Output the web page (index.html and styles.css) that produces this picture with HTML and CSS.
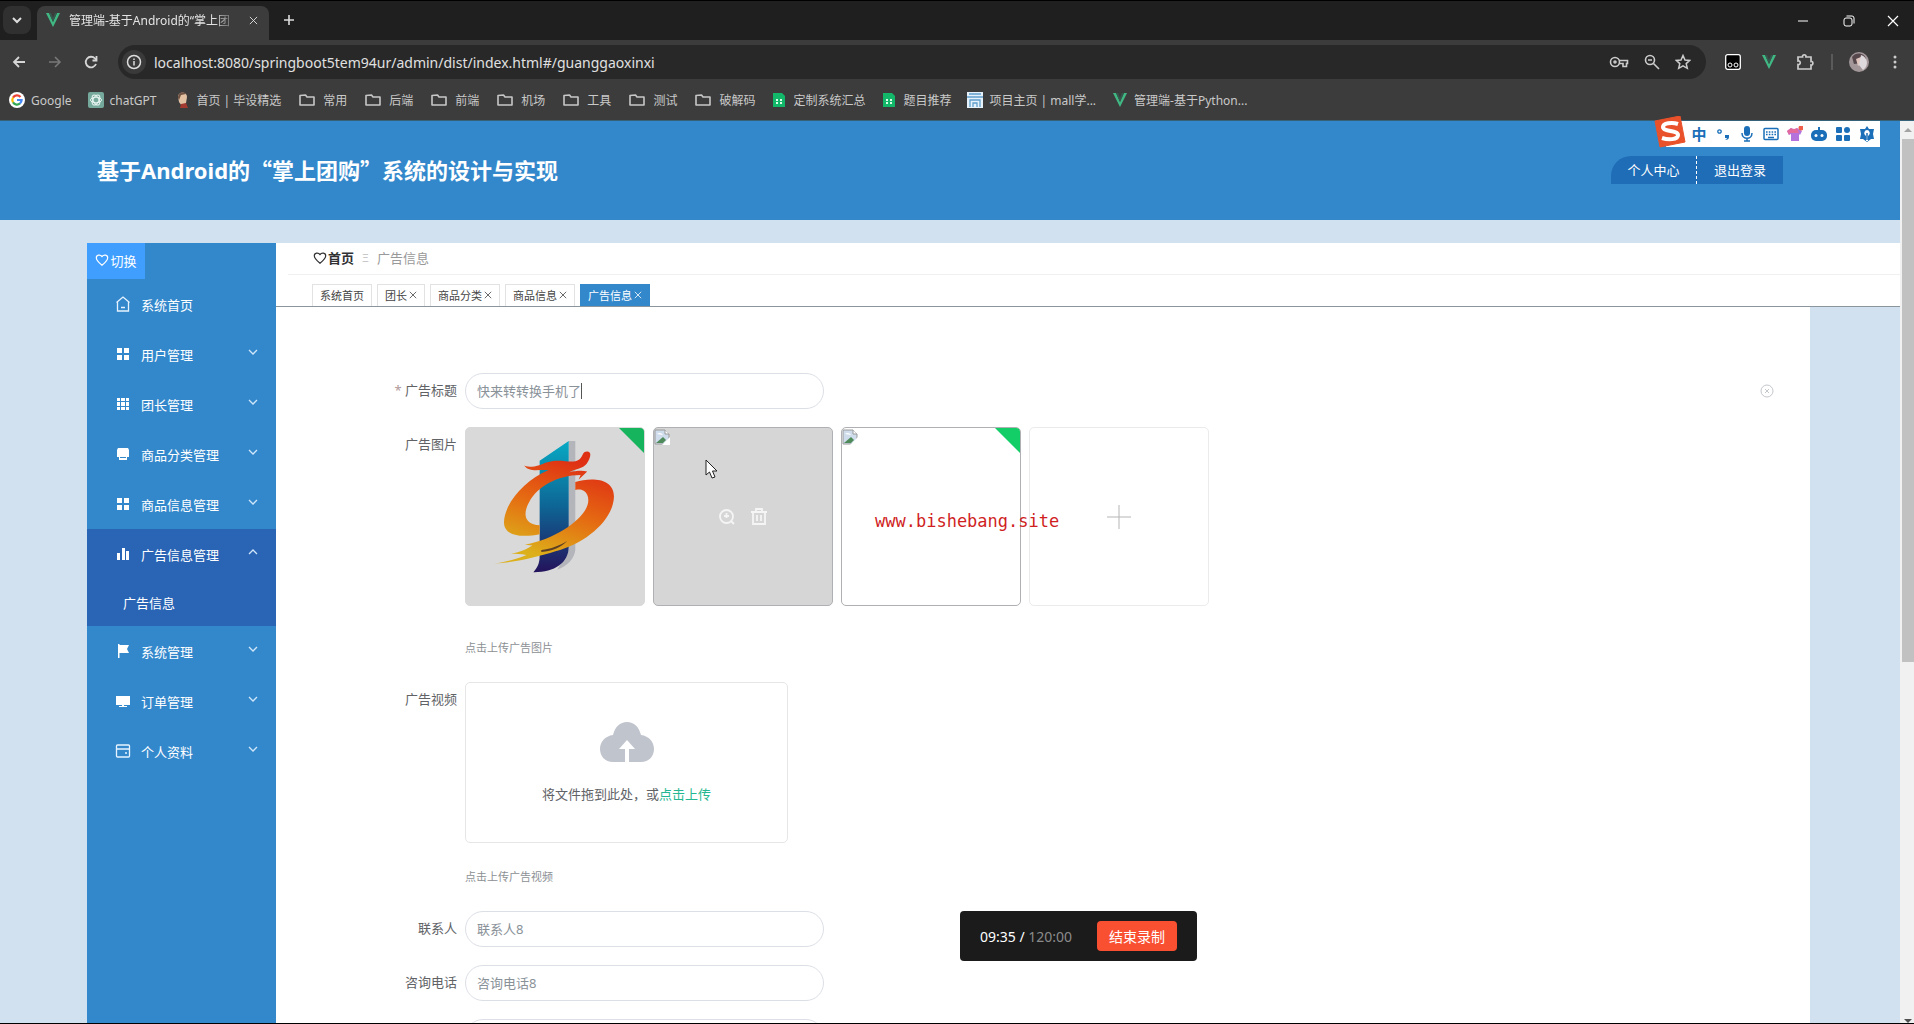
FILE: index.html
```html
<!DOCTYPE html>
<html lang="zh-CN">
<head>
    <meta charset="UTF-8">
    <meta name="viewport" content="width=device-width, initial-scale=1.0">
    <title>管理端-基于Android的“掌上团购”系统的设计与实现</title>
    <link rel="stylesheet" href="styles.css">
</head>
<body>

    <!-- shared icons -->
    <svg class="sprite" aria-hidden="true">
        <symbol id="vue" viewBox="0 0 16 16"><path d="M1 1h3l4 9 4-9h3L8 15z" fill="#41b883"/><path d="M4 1h2l2 5 2-5h2L8 10z" fill="#35594e"/></symbol>
        <symbol id="folder" viewBox="0 0 20 16"><path d="M3 3.500v9.500h14V5H10L8.500 3z" fill="none" stroke="#c7c7c7" stroke-width="1.600" stroke-linejoin="round"/></symbol>
        <symbol id="sheet" viewBox="0 0 16 16"><path d="M2 1h9l3 3v11H2z" fill="#12b76a"/><path d="M5 7h2v2H5zM9 7h2v2H9zM5 10h2v2H5zM9 10h2v2H9z" fill="#d9ffe9"/></symbol>
        <symbol id="heart" viewBox="0 0 16 16"><path d="M8 14C3 10 1.500 8 1.500 5.500 1.500 2 6 1.500 8 4c2-2.500 6.500-2 6.500 1.500C14.500 8 13 10 8 14z" fill="none" stroke="currentColor" stroke-width="1.400"/></symbol>
        <symbol id="four" viewBox="0 0 14 14"><path d="M1 1h5v5H1zM8 1h5v5H8zM1 8h5v5H1zM8 8h5v5H8z" fill="#fff"/></symbol>
        <symbol id="down" viewBox="0 0 12 12"><path d="M2 4l4 4 4-4" fill="none" stroke="#cfe6fa" stroke-width="1.300"/></symbol>
        <symbol id="close" viewBox="0 0 10 10"><path d="M1 1l8 8M9 1L1 9" fill="none" stroke="currentColor"/></symbol>
        <symbol id="broken" viewBox="0 0 16 16"><path d="M1 1h10l4 4v10H1z" fill="#cfdcec" stroke="#9a9a9a"/><path d="M2 14l7-6 3 3-3 3z" fill="#4f8a5a"/><path d="M3 5c2-2 5-1 6 1z" fill="#fff"/><path d="M16 8L8 16h8z" fill="#fff"/><path d="M11 1v4h4" fill="#fff" stroke="#9a9a9a"/></symbol>
    </svg>

    <div class="tabstrip">
        <button class="tab-search" aria-label="搜索标签页">
            <svg width="12" height="12" viewBox="0 0 12 12"><path d="M2 4l4 4 4-4" fill="none" stroke="#ddd" stroke-width="2"/></svg>
        </button>
        <div class="browser-tab">
            <svg width="16" height="16"><use href="#vue"/></svg>
            <span class="tab-title">管理端-基于Android的“掌上团</span>
            <button class="tab-close" aria-label="关闭标签页"><svg width="9" height="9"><use href="#close"/></svg></button>
        </div>
        <button class="new-tab" aria-label="新标签页">
            <svg width="12" height="12" viewBox="0 0 12 12"><path d="M6 1v10M1 6h10" stroke="#ddd" stroke-width="1.600"/></svg>
        </button>
        <div class="window-controls">
            <button aria-label="最小化"><svg width="12" height="12" viewBox="0 0 12 12"><path d="M1 6h10" stroke="#fff"/></svg></button>
            <button aria-label="还原"><svg width="12" height="12" viewBox="0 0 12 12" fill="none" stroke="#fff"><rect x="1" y="3" width="8" height="8" rx="2"/><path d="M3.500 1H9a2 2 0 0 1 2 2v5.500"/></svg></button>
            <button aria-label="关闭"><svg width="12" height="12" viewBox="0 0 12 12"><path d="M1 1l10 10M11 1L1 11" stroke="#fff" stroke-width="1.200"/></svg></button>
        </div>
    </div>

    <div class="toolbar">
        <button class="tool-btn" aria-label="后退"><svg width="14" height="14" viewBox="0 0 14 14" fill="none" stroke="#d6d6d6" stroke-width="1.800"><path d="M13 7H2M7 2L2 7l5 5"/></svg></button>
        <button class="tool-btn" aria-label="前进"><svg width="14" height="14" viewBox="0 0 14 14" fill="none" stroke="#787878" stroke-width="1.600"><path d="M1 7h11M7 2l5 5-5 5"/></svg></button>
        <button class="tool-btn" aria-label="重新加载"><svg width="14" height="14" viewBox="0 0 14 14" fill="none" stroke="#d6d6d6" stroke-width="1.800"><path d="M12 9A5.300 5.300 0 1 1 11 3.500L12.500 5"/><path d="M12.500 1v4.500H8.500"/></svg></button>
        <div class="omnibox">
            <span class="site-info"><svg width="16" height="16" viewBox="0 0 16 16" fill="none" stroke="#ddd" stroke-width="1.500"><circle cx="8" cy="8" r="6.500"/><path d="M8 7v4.500M8 4.500v1.500"/></svg></span>
            <input class="url" type="text" aria-label="地址栏" value="localhost:8080/springboot5tem94ur/admin/dist/index.html#/guanggaoxinxi">
            <div class="omni-icons">
                <svg width="20" height="16" viewBox="0 0 20 16" fill="none" stroke="#ccc" stroke-width="1.600"><circle cx="6" cy="8" r="4.500"/><circle cx="6" cy="8" r="1"/><path d="M10 6.500h8.500v3h-1v3h-3.500V9.500H10"/></svg>
                <svg width="16" height="16" viewBox="0 0 16 16" fill="none" stroke="#ccc" stroke-width="1.600"><circle cx="6" cy="6" r="4.500"/><path d="M9.500 9.500L15 15M4 6h4"/></svg>
                <svg width="16" height="16" viewBox="0 0 16 16" fill="none" stroke="#ccc" stroke-width="1.500"><path d="M8 1.500l2 4.500 4.800.4-3.600 3.200 1.100 4.700L8 11.800l-4.300 2.500 1.100-4.700L1.200 6.400 6 6z"/></svg>
            </div>
        </div>
        <button class="tool-btn" aria-label="扩展"><svg width="16" height="16" viewBox="0 0 16 16"><rect x=".7" y=".7" width="14.600" height="14.600" rx="2" fill="#000" stroke="#fff" stroke-width="1.300"/><circle cx="5" cy="11" r="2" fill="none" stroke="#fff"/><circle cx="11" cy="11" r="2" fill="none" stroke="#fff"/></svg></button>
        <button class="tool-btn" aria-label="Vue"><svg width="16" height="16"><use href="#vue"/></svg></button>
        <button class="tool-btn" aria-label="扩展程序"><svg width="18" height="18" viewBox="0 0 18 18" fill="none" stroke="#ccc" stroke-width="1.700"><path d="M2 4h4.500c-.5-3 4-3 3.500 0H15v4.500c2.500-.5 2.500 4 0 3.500V16H2v-4.500c3 .5 3-4 0-3.500z"/></svg></button>
        <span class="divider"></span>
        <button class="avatar" aria-label="用户"><svg width="20" height="20" viewBox="0 0 20 20"><circle cx="10" cy="10" r="10" fill="#a3979a"/><path d="M3 5c4-6 13-4 14 2l-5 4-7 1z" fill="#55474b"/><path d="M7 7l5-2 2 5-5 4z" fill="#e2c6c0"/><path d="M12 3c7 2 8 11 2 15l-4-5z" fill="#ddd9dc"/></svg></button>
        <button class="tool-btn" aria-label="菜单"><svg width="4" height="16" viewBox="0 0 4 16" fill="#ccc"><circle cx="2" cy="3" r="1.500"/><circle cx="2" cy="8" r="1.500"/><circle cx="2" cy="13" r="1.500"/></svg></button>
    </div>

    <nav class="bookmarks">
        <a href="#"><svg width="16" height="16" viewBox="0 0 16 16"><circle cx="8" cy="8" r="8" fill="#fff"/><g fill="none" stroke-width="2.200"><path d="M11.500 5A4.600 4.600 0 0 0 4 5.600" stroke="#ea4335"/><path d="M4 5.600a4.600 4.600 0 0 0 0 4.800" stroke="#fbbc05"/><path d="M4 10.400a4.600 4.600 0 0 0 7 1" stroke="#34a853"/><path d="M11 11.400A4.600 4.600 0 0 0 12.600 8H8" stroke="#4285f4"/></g></svg>Google</a>
        <a href="#"><svg width="16" height="16" viewBox="0 0 16 16"><rect width="16" height="16" rx="2" fill="#75a99c"/><g fill="none" stroke="#e8f5f1"><ellipse cx="8" cy="8" rx="5.500" ry="2.800"/><ellipse cx="8" cy="8" rx="5.500" ry="2.800" transform="rotate(60 8 8)"/><ellipse cx="8" cy="8" rx="5.500" ry="2.800" transform="rotate(120 8 8)"/></g></svg>chatGPT</a>
        <a href="#"><svg width="18" height="16" viewBox="0 0 18 16"><path d="M6 5c0-6 9-6 9 0l-1 6-4 3-3-4z" fill="#e3c2a4"/><path d="M6 6c0-7 7-6 8-4L9 3 7 8z" fill="#6e5140"/><path d="M8 16l1-4 5-1 2 5z" fill="#a33a32"/></svg>首页 | 毕设精选</a>
        <a href="#"><svg width="20" height="16"><use href="#folder"/></svg>常用</a>
        <a href="#"><svg width="20" height="16"><use href="#folder"/></svg>后端</a>
        <a href="#"><svg width="20" height="16"><use href="#folder"/></svg>前端</a>
        <a href="#"><svg width="20" height="16"><use href="#folder"/></svg>机场</a>
        <a href="#"><svg width="20" height="16"><use href="#folder"/></svg>工具</a>
        <a href="#"><svg width="20" height="16"><use href="#folder"/></svg>测试</a>
        <a href="#"><svg width="20" height="16"><use href="#folder"/></svg>破解码</a>
        <a href="#"><svg width="16" height="16"><use href="#sheet"/></svg>定制系统汇总</a>
        <a href="#"><svg width="16" height="16"><use href="#sheet"/></svg>题目推荐</a>
        <a href="#"><svg width="16" height="16" viewBox="0 0 16 16"><rect width="16" height="16" fill="#e6f2fb"/><path d="M0 5h16M2 2h12M3 15V8h10v7M6 15v-4h4v4" fill="none" stroke="#5f9fcb" stroke-width="1.300"/></svg>项目主页 | mall学...</a>
        <a href="#"><svg width="16" height="16"><use href="#vue"/></svg>管理端-基于Python...</a>
    </nav>

    <div class="viewport">
        <div class="page">
            <header class="site-header">
                <h1>基于Android的<span class="cjk">“掌上团购”</span>系统的设计与实现</h1>
                <div class="user-links">
                    <button class="profile">个人中心</button>
                    <button>退出登录</button>
                </div>
            </header>

            <div class="layout">
                <aside class="sidebar">
                    <button class="toggle"><svg width="14" height="14"><use href="#heart"/></svg>切换</button>
                    <nav class="menu">
                        <a href="#"><svg class="icon" width="16" height="16" viewBox="0 0 16 16" fill="none" stroke="#e6f3ff" stroke-width="1.300"><path d="M1.500 6.500L8 1l6.500 5.500M2.500 6v9h11V6M6 11.500h4"/></svg><span>系统首页</span></a>
                        <a href="#"><svg class="icon" width="14" height="14"><use href="#four"/></svg><span>用户管理</span><svg class="arrow" width="12" height="12"><use href="#down"/></svg></a>
                        <a href="#"><svg class="icon" width="14" height="14" viewBox="0 0 14 14" fill="#fff"><path d="M1 1h3v3H1zM5 1h4v3H5zM10 1h3v3h-3zM1 5h3v4H1zM5 5h4v4H5zM10 5h3v4h-3zM1 10h3v3H1zM5 10h4v3H5zM10 10h3v3h-3z"/></svg><span>团长管理</span><svg class="arrow" width="12" height="12"><use href="#down"/></svg></a>
                        <a href="#"><svg class="icon" width="14" height="14" viewBox="0 0 14 14" fill="#fff"><path d="M2 1h10l1 2v7h-2v3H3v-3H1V3zM4 10v1h6v-1z" fill-rule="evenodd"/></svg><span>商品分类管理</span><svg class="arrow" width="12" height="12"><use href="#down"/></svg></a>
                        <a href="#"><svg class="icon" width="14" height="14"><use href="#four"/></svg><span>商品信息管理</span><svg class="arrow" width="12" height="12"><use href="#down"/></svg></a>
                        <a class="active" href="#"><svg class="icon" width="14" height="14" viewBox="0 0 14 14" fill="#fff"><path d="M1 6h3v7H1zM6 1h3v12H6zM10 4h3v9h-3z"/></svg><span>广告信息管理</span><svg class="arrow" width="12" height="12" viewBox="0 0 12 12"><path d="M2 8l4-4 4 4" fill="none" stroke="#cfe6fa" stroke-width="1.300"/></svg></a>
                        <a class="active submenu" href="#">广告信息</a>
                        <a href="#"><svg class="icon" width="14" height="14" viewBox="0 0 14 14" fill="#fff"><path d="M2 0h1.500v14H2zM3 1h10l-2 4 2 4H3z"/></svg><span>系统管理</span><svg class="arrow" width="12" height="12"><use href="#down"/></svg></a>
                        <a href="#"><svg class="icon" width="14" height="14" viewBox="0 0 14 14" fill="#fff"><path d="M0 2h14v9H0zM6 11h2v1h3v1H3v-1h3z"/></svg><span>订单管理</span><svg class="arrow" width="12" height="12"><use href="#down"/></svg></a>
                        <a href="#"><svg class="icon" width="16" height="16" viewBox="0 0 16 16" fill="none" stroke="#e6f3ff" stroke-width="1.300"><rect x="1.500" y="2" width="13" height="12" rx="1"/><path d="M1.500 6h13M10 10h2"/></svg><span>个人资料</span><svg class="arrow" width="12" height="12"><use href="#down"/></svg></a>
                    </nav>
                </aside>

                <main class="main">
                    <div class="main-top">
                        <div class="breadcrumb">
                            <svg width="14" height="14"><use href="#heart"/></svg>
                            <a href="#">首页</a>
                            <span class="sep">Ξ</span>
                            <span>广告信息</span>
                        </div>
                        <div class="page-tabs">
                            <button>系统首页</button>
                            <button>团长<svg width="8" height="8"><use href="#close"/></svg></button>
                            <button>商品分类<svg width="8" height="8"><use href="#close"/></svg></button>
                            <button>商品信息<svg width="8" height="8"><use href="#close"/></svg></button>
                            <button class="current">广告信息<svg width="8" height="8"><use href="#close"/></svg></button>
                        </div>
                    </div>

                    <form class="ad-form">
                        <div class="form-item">
                            <label for="title"><span class="required">*</span> 广告标题</label>
                            <div class="field title-field">
                                <input type="text" id="title" value="快来转转换手机了">
                                <span class="caret"></span>
                                <svg class="clear" width="14" height="14" viewBox="0 0 14 14" fill="none" stroke="#c4c7cc"><circle cx="7" cy="7" r="6"/><path d="M5 5l4 4M9 5l-4 4"/></svg>
                            </div>
                        </div>
                        <div class="form-item">
                            <label for="picture">广告图片</label>
                            <div class="field">
                                <div class="pictures">
                                    <div class="picture dimmed">
                                        <svg class="artwork" viewBox="77 52 536 533">
                                            <defs>
                                                <linearGradient id="bar" x1="0" y1="0" x2="0" y2="1"><stop offset="0" stop-color="#08a9c4"/><stop offset=".5" stop-color="#0e6595"/><stop offset="1" stop-color="#24135c"/></linearGradient>
                                                <linearGradient id="fire" gradientUnits="userSpaceOnUse" x1="400" y1="150" x2="300" y2="440"><stop offset="0" stop-color="#df3014"/><stop offset=".5" stop-color="#e56a12"/><stop offset="1" stop-color="#dcb01a"/></linearGradient>
                                            </defs>
                                            <path d="M385 90h20v330q-5 40-55 60l35-60z" fill="#b4b5bb"/>
                                            <path d="M297 150l88-60v320c0 50-45 78-107 77 12-15 19-25 19-50z" fill="url(#bar)"/>
                                            <path d="M250 164c40 14 55-12 95-14 35-1 53 8 72-4 12-8 8-24 24-24s9 22-1 36c-12 17-37 16-54 27 20-5 39-6 55-3l-26 25 6-14c-72 1-130 35-156 82-22 40-10 69 32 70v27c-50 10-108 8-108-36 1-55 60-126 135-158-35-2-58 7-74-14z" fill="url(#fire)"/>
                                            <path d="M405 214c45-14 118-14 117 45-2 70-85 141-177 165-55 17-120 34-186 37 45-6 78-17 98-26-17-4-32-4-47-4 31-6 48-14 65-25l-23-2c48-9 83-24 118-45 54-34 85-74 71-106-7-15-20-18-36-15z" fill="url(#fire)"/>
                                            <path d="M302 420c30-3 55-13 78-27-18 19-43 30-78 33z" fill="#5d4024"/>
                                        </svg>
                                        <span class="badge"></span>
                                    </div>
                                    <div class="picture hovered">
                                        <svg class="broken" width="16" height="16"><use href="#broken"/></svg>
                                        <button type="button" aria-label="预览"><svg width="18" height="18" viewBox="0 0 18 18" fill="none" stroke="#f5f5f5" stroke-width="1.800"><circle cx="8.500" cy="8.500" r="6.500"/><path d="M13 13l3 3M8.500 5v5M6 8h5"/></svg></button>
                                        <button type="button" aria-label="删除"><svg width="18" height="18" viewBox="0 0 18 18" fill="none" stroke="#f5f5f5" stroke-width="1.800"><path d="M1 4h16M6 4V1h6v3M3 4v12h12V4M7 7v6M11 7v6"/></svg></button>
                                        <svg class="cursor" width="14" height="20" viewBox="0 0 14 20"><path d="M1 1v15l3.500-3 2.500 6 3-1-2.500-6H12z" fill="#fff" stroke="#222"/></svg>
                                    </div>
                                    <div class="picture loaded">
                                        <svg class="broken" width="16" height="16"><use href="#broken"/></svg>
                                        <span class="badge"></span>
                                    </div>
                                    <button type="button" class="picture add" id="picture" aria-label="添加图片"><svg width="24" height="24" viewBox="0 0 24 24"><path d="M12 0v24M0 12h24" stroke="#b5b5b5"/></svg></button>
                                </div>
                                <p class="tip">点击上传广告图片</p>
                            </div>
                        </div>
                        <div class="form-item">
                            <label for="video">广告视频</label>
                            <div class="field">
                                <button type="button" class="dragger" id="video">
                                    <svg width="54" height="40" viewBox="0 0 54 40"><path d="M13 40C5 40 0 34 0 27c0-7 5-13 13-14C15 5 20 0 27 0s12 5 14 13c8 1 13 7 13 14 0 7-5 13-13 13H29V27h6l-8-9-8 9h6v13z" fill="#c0c4cc"/></svg>
                                    <span>将文件拖到此处，或<em>点击上传</em></span>
                                </button>
                                <p class="tip video-tip">点击上传广告视频</p>
                            </div>
                        </div>
                        <div class="form-item">
                            <label for="contact">联系人</label>
                            <div class="field"><input type="text" id="contact" value="联系人8"></div>
                        </div>
                        <div class="form-item">
                            <label for="phone">咨询电话</label>
                            <div class="field"><input type="text" id="phone" value="咨询电话8"></div>
                        </div>
                        <div class="form-item">
                            <div class="field last"><input type="text" aria-label="其他"></div>
                        </div>
                    </form>
                </main>
            </div>
        </div>

        <div class="scrollbar">
            <svg width="12" height="18" viewBox="0 0 12 18"><path d="M2 11l4-4 4 4z" fill="#a3a3a3"/></svg>
            <div class="thumb"></div>
            <svg width="12" height="8" viewBox="0 0 12 8"><path d="M2 4h8l-4 4z" fill="#505050"/></svg>
        </div>

        <!-- input method bar -->
        <div class="ime">
            <svg class="ime-logo" width="32" height="32" viewBox="0 0 32 32"><path d="M1 5l25-5 5 26-25 5z" fill="#e9512a" stroke="#e9512a" stroke-linejoin="round"/><path d="M24 8c-6-2-15-1-15 3 0 5 15 3 15 8 0 5-10 5-16 3" fill="none" stroke="#fff" stroke-width="4"/></svg>
            <span class="ime-lang">中</span>
            <svg width="16" height="16" viewBox="0 0 16 16"><circle cx="4.500" cy="5.500" r="1.700" fill="none" stroke="#1a6fb8" stroke-width="1.300"/><path d="M10 9h4v2q0 3-4 3 2-1 2-2h-2z" fill="#1a6fb8"/></svg>
            <svg width="16" height="16" viewBox="0 0 16 16"><rect x="5" y="0" width="6" height="10" rx="3" fill="#1a6fb8"/><path d="M3 7c0 7 10 7 10 0M8 12v3M5 15h6" fill="none" stroke="#1a6fb8" stroke-width="1.500"/></svg>
            <svg width="16" height="16" viewBox="0 0 16 16" fill="none" stroke="#1a6fb8" stroke-width="1.500"><rect x="1" y="2.500" width="14" height="11" rx="1"/><path d="M3 6h10M3 8.500h10" stroke-width="1.700" stroke-dasharray="1.600 1.200"/><path d="M5 11.500h6"/></svg>
            <svg width="16" height="16" viewBox="0 0 16 16"><path d="M0 5l4-3q3 2 6 0l5 3-2 4-1-1v7H4V8L2 9z" fill="#b473dc"/><path d="M0 5l4-3q3 2 6 0l2 5H3L2 9z" fill="#e46a9b"/><circle cx="14" cy="2" r="2.500" fill="#ef5f4b"/></svg>
            <svg width="16" height="16" viewBox="0 0 16 16"><rect x="0" y="4" width="16" height="11" rx="5" fill="#1a6fb8"/><path d="M8 4V1" stroke="#1a6fb8" stroke-width="2"/><circle cx="5" cy="9.500" r="1.500" fill="#fff"/><circle cx="11" cy="9.500" r="1.500" fill="#fff"/></svg>
            <svg width="16" height="16" viewBox="0 0 16 16" fill="#1a6fb8"><rect x="1" y="1" width="6" height="6" rx="1"/><rect x="9" y="1" width="6" height="6" rx="3"/><rect x="1" y="9" width="6" height="6" rx="1"/><rect x="9" y="9" width="6" height="6" rx="1"/></svg>
            <svg width="16" height="16" viewBox="0 0 16 16"><path d="M8 0l2 3h5l-1 5 1 5h-3l-4 3-4-3H1l1-5-1-5h5z" fill="#1a6fb8"/><path d="M8 4a3 3 0 0 0-2 5l1 1v5h2v-5l1-1a3 3 0 0 0-2-5z" fill="#fff"/><path d="M8 7v7" stroke="#1a6fb8" stroke-width="1.500"/></svg>
        </div>

        <div class="watermark">www.bishebang.site</div>

        <div class="recorder">
            <span class="elapsed">09:35 / <span class="limit">120:00</span></span>
            <button>结束录制</button>
        </div>
    </div>

</body>
</html>
```
FILE: styles.css
```css
* {
    box-sizing: border-box;
}

body {
    display: flex;
    flex-direction: column;
    height: 100vh;
    margin: 0;
    overflow: hidden;
    border-top: 1px solid #000;
    border-bottom: 1px solid #000;
    background-color: #3c3c3c;
    font-family: "Noto Sans", "Noto Sans CJK SC", sans-serif;
    font-size: 13px;
}

button,
input {
    margin: 0;
    padding: 0;
    border: none;
    background: none;
    color: inherit;
    font: inherit;
}

button {
    display: flex;
    align-items: center;
    justify-content: center;
}

a {
    color: inherit;
    text-decoration: none;
}

svg {
    flex: none;
}

.sprite {
    position: absolute;
    width: 0;
    height: 0;
}

/* browser window */
.tabstrip {
    display: flex;
    flex: none;
    align-items: flex-end;
    height: 39px;
    padding-left: 3px;
    background-color: #1f1f1f;
}

.tab-search {
    width: 28px;
    height: 28px;
    margin-bottom: 6px;
    border-radius: 8px;
    background-color: #303030;
}

.browser-tab {
    display: flex;
    align-items: center;
    width: 232px;
    height: 34px;
    margin-left: 6px;
    padding: 0 9px 6px 8px;
    border-radius: 8px 8px 0 0;
    background-color: #3c3c3c;
    color: #e3e3e3;
    font-size: 12px;
}

.tab-title {
    flex: 1;
    margin: 0 8px;
    white-space: nowrap;
    mask-image: linear-gradient(to right, #000 86%, transparent);
}

.tab-close {
    width: 14px;
    height: 20px;
}

.new-tab {
    width: 28px;
    height: 28px;
    margin: 0 0 6px 6px;
}

.window-controls {
    display: flex;
    margin-left: auto;
}

.window-controls button {
    width: 46px;
    height: 39px;
}

.window-controls button:last-child {
    width: 42px;
}

.toolbar {
    display: flex;
    flex: none;
    align-items: center;
    gap: 8px;
    height: 40px;
    padding: 4px 5px 0;
}

.tool-btn {
    width: 28px;
    height: 28px;
}

.omnibox {
    display: flex;
    flex: 1;
    align-items: center;
    height: 34px;
    margin: 0 5px;
    padding: 0 15px 0 4px;
    border-radius: 17px;
    background-color: #282828;
}

.site-info {
    display: flex;
    align-items: center;
    justify-content: center;
    width: 24px;
    height: 24px;
    border-radius: 50%;
    background-color: #3a3a3a;
}

.url {
    flex: 1;
    margin-left: 8px;
    color: #e0e0e0;
    font-size: 14px;
}

.omni-icons {
    display: flex;
    gap: 15px;
}

.divider {
    width: 2px;
    height: 16px;
    margin: 0 8px 0 4px;
    background-color: #5a5a5a;
}

.avatar {
    width: 20px;
    height: 20px;
    margin-right: 4px;
}

.bookmarks {
    display: flex;
    flex: none;
    align-items: center;
    gap: 16px;
    height: 41px;
    padding: 0 9px;
    border-bottom: 1px solid #356179;
    color: #c9c9c9;
    font-size: 12px;
    white-space: nowrap;
}

.bookmarks a {
    display: flex;
    align-items: center;
    gap: 6px;
}

/* page */
.viewport {
    position: relative;
    display: flex;
    flex: 1;
    min-height: 0;
    background-color: #d2e1f0;
}

.page {
    display: flex;
    flex: 1;
    flex-direction: column;
    min-width: 0;
    overflow: hidden;
}

.site-header {
    display: flex;
    flex: none;
    align-items: center;
    justify-content: space-between;
    height: 99px;
    padding: 0 117px 2px 97px;
    background-color: #3388cc;
    color: #fff;
}

.site-header h1 {
    margin: 0;
    font-size: 22px;
    line-height: 32px;
}

.cjk {
    font-family: "Noto Sans CJK SC", sans-serif;
}

.user-links {
    display: flex;
}

.user-links button {
    width: 86px;
    height: 28px;
    background-color: #1f6db7;
}

.user-links .profile {
    border-right: 1px dashed #fff;
    border-top-left-radius: 20px;
}

.layout {
    display: flex;
    flex: 1;
    min-height: 0;
    padding: 23px 0 0 87px;
}

.sidebar {
    flex: none;
    width: 189px;
    background-color: #3388cc;
    color: #fff;
}

.toggle {
    gap: 1px;
    width: 58px;
    height: 36px;
    padding-bottom: 2px;
    background-color: #409eff;
}

.menu a {
    display: flex;
    align-items: center;
    height: 50px;
    padding: 0 17px 0 28px;
}

.menu .active {
    background-color: #2964b5;
}

.menu .submenu {
    height: 47px;
    padding-left: 36px;
}

.menu .icon {
    width: 16px;
    margin-right: 10px;
}

.menu .arrow {
    margin: 0 0 4px auto;
}

.main {
    display: flex;
    flex: 1;
    flex-direction: column;
    min-width: 0;
}

.main-top {
    flex: none;
    border-bottom: 1px solid #8b959e;
    background-color: #fff;
}

.breadcrumb {
    display: flex;
    align-items: center;
    height: 32px;
    margin-left: 12px;
    padding: 0 0 2px 25px;
    border-bottom: 1px solid #f0f0f0;
    color: #999;
}

.breadcrumb svg,
.breadcrumb a {
    color: #303133;
    font-weight: bold;
}

.breadcrumb a {
    margin-left: 1px;
}

.breadcrumb .sep {
    margin: 0 8px;
    color: #c8c8c8;
    font-size: 11px;
}

.page-tabs {
    display: flex;
    gap: 5px;
    padding: 9px 36px 0;
}

.page-tabs button {
    gap: 2px;
    height: 22px;
    padding: 0 7px 2px;
    border: 1px solid #e2e2e2;
    border-bottom: none;
    color: #444;
    font-size: 11px;
}

.page-tabs .current {
    border-color: #3388cc;
    background-color: #3388cc;
    color: #fff;
}

.ad-form {
    flex: 1;
    min-height: 0;
    margin-right: 90px;
    padding: 66px 36px 0 0;
    background-color: #fff;
    color: #606266;
}

.form-item {
    display: flex;
    margin-bottom: 18px;
}

.form-item label {
    width: 189px;
    padding-right: 8px;
    line-height: 34px;
    text-align: right;
}

.required {
    color: #b09a9a;
}

.field {
    flex: 1;
}

.field.last {
    margin-left: 189px;
}

.field input {
    display: block;
    width: 359px;
    height: 36px;
    padding: 0 11px 2px;
    border: 1px solid #dcdfe6;
    border-radius: 18px;
    color: #8a9299;
}

.title-field {
    position: relative;
    display: flex;
    align-items: center;
    justify-content: space-between;
}

.caret {
    position: absolute;
    left: 116px;
    width: 1px;
    height: 16px;
    background-color: #555;
}

.pictures {
    display: flex;
    gap: 8px;
}

.picture {
    position: relative;
    display: flex;
    align-items: center;
    justify-content: center;
    gap: 14px;
    width: 180px;
    height: 179px;
    overflow: hidden;
    border: 1px solid #aeb0b3;
    border-radius: 5px;
    background-color: #fff;
}

.picture.dimmed {
    border-color: #d9d9d9;
    background-color: #d9d9d9;
}

.picture.hovered {
    background-color: #d6d6d6;
}

.picture.add {
    border: 1px solid #ebebeb;
}

.artwork {
    width: 177px;
    height: 177px;
}

.badge {
    position: absolute;
    top: 0;
    right: 0;
    width: 25px;
    height: 25px;
    background-color: #13ce66;
    clip-path: polygon(0 0, 100% 0, 100% 100%);
}

.dimmed .badge {
    background-color: #16b45c;
}

.broken {
    position: absolute;
    top: 1px;
    left: 0;
}

.cursor {
    position: absolute;
    top: 31px;
    left: 51px;
}

.tip {
    margin: 25px 0 0;
    color: #8c9094;
    font-size: 11px;
    line-height: 33px;
}

.video-tip {
    margin-top: 17px;
}

.dragger {
    flex-direction: column;
    gap: 22px;
    width: 323px;
    height: 161px;
    border: 1px solid #e6e6e6;
    border-radius: 5px;
}

.dragger em {
    color: #25b791;
    font-style: normal;
}

.scrollbar {
    display: flex;
    flex: none;
    flex-direction: column;
    width: 14px;
    padding-left: 2px;
    background-color: #f1f1f1;
}

.thumb {
    height: 58%;
    margin-bottom: auto;
    background-color: #c1c1c1;
}

/* floating windows */
.ime {
    position: absolute;
    top: 0;
    right: 34px;
    display: flex;
    align-items: center;
    gap: 8px;
    height: 26px;
    padding-right: 5px;
    background-color: #fff;
}

.ime-logo {
    margin: -4px -3px 0 -12px;
}

.ime-lang {
    width: 16px;
    color: #1a6fb8;
    font-size: 15px;
    font-weight: bold;
    line-height: 22px;
    text-align: center;
}

.watermark {
    position: absolute;
    top: 386px;
    left: 875px;
    color: #d01f1f;
    font-family: "DejaVu Sans Mono", monospace;
    font-size: 17px;
    line-height: 28px;
}

.recorder {
    position: absolute;
    bottom: 62px;
    left: 960px;
    display: flex;
    align-items: center;
    justify-content: space-between;
    width: 237px;
    height: 50px;
    padding: 0 20px;
    border-radius: 4px;
    background-color: #1b1b1b;
    color: #fff;
    font-size: 14px;
}

.limit {
    color: #8a8a8a;
}

.recorder button {
    width: 80px;
    height: 30px;
    border-radius: 4px;
    background-color: #fa5032;
}
```
